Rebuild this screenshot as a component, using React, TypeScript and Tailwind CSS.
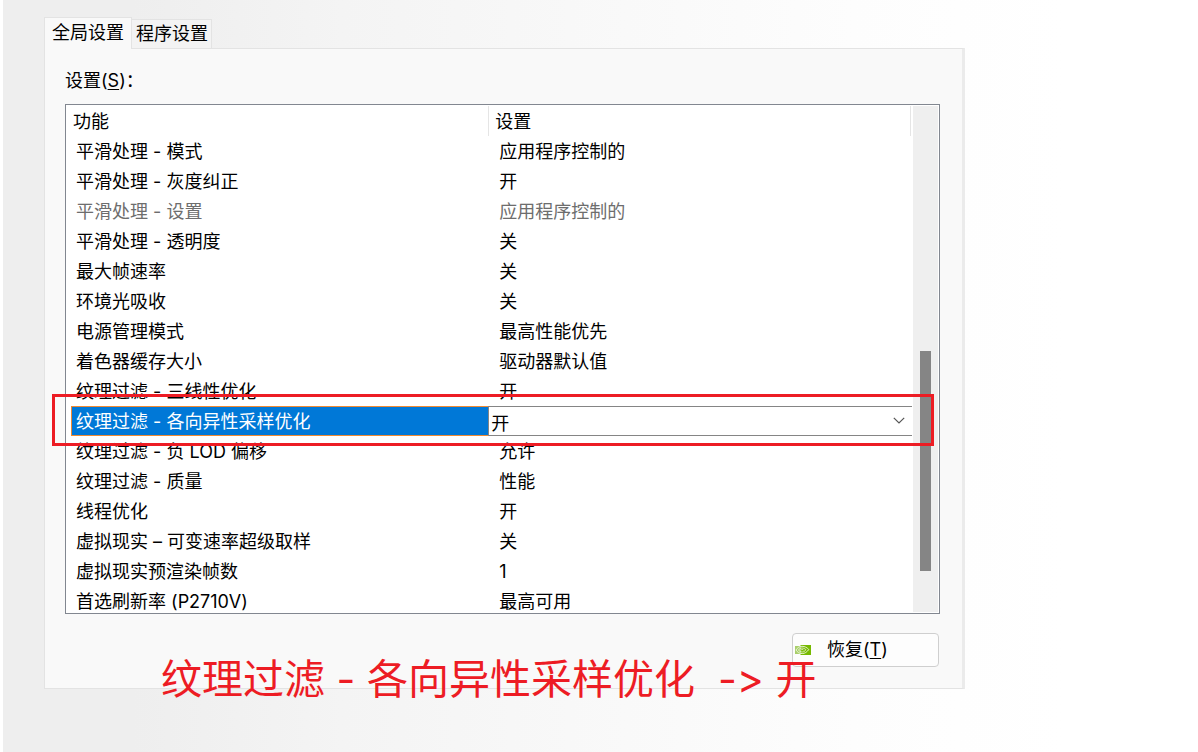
import clsx from "clsx";

type Setting = {
  name: string;
  value: string;
  disabled?: boolean;
  selected?: boolean;
};

const settings: Setting[] = [
  { name: "平滑处理 - 模式", value: "应用程序控制的" },
  { name: "平滑处理 - 灰度纠正", value: "开" },
  { name: "平滑处理 - 设置", value: "应用程序控制的", disabled: true },
  { name: "平滑处理 - 透明度", value: "关" },
  { name: "最大帧速率", value: "关" },
  { name: "环境光吸收", value: "关" },
  { name: "电源管理模式", value: "最高性能优先" },
  { name: "着色器缓存大小", value: "驱动器默认值" },
  { name: "纹理过滤 - 三线性优化", value: "开" },
  { name: "纹理过滤 - 各向异性采样优化", value: "开", selected: true },
  { name: "纹理过滤 - 负 LOD 偏移", value: "允许" },
  { name: "纹理过滤 - 质量", value: "性能" },
  { name: "线程优化", value: "开" },
  { name: "虚拟现实 – 可变速率超级取样", value: "关" },
  { name: "虚拟现实预渲染帧数", value: "1" },
  { name: "首选刷新率 (P2710V)", value: "最高可用" },
];

const Tabs = () => {
  return (
    <div role="tablist" className="relative z-10 -mb-px flex items-end">
      <button
        type="button"
        role="tab"
        aria-selected="true"
        className="h-8 border border-b-0 border-[#e3e3e3] bg-[#f9f9f9] px-[7px] pb-[2px]"
      >
        全局设置
      </button>
      <button
        type="button"
        role="tab"
        aria-selected="false"
        className="h-[30px] border border-l-0 border-[#e3e3e3] bg-[#f3f3f3] pr-[3px] pl-1"
      >
        程序设置
      </button>
    </div>
  );
};

const SettingRow = ({ name, value, disabled, selected }: Setting) => {
  if (selected) {
    return (
      <tr className="h-[30px]">
        <td className="p-0 pl-[5px]">
          <label
            htmlFor="aniso"
            className="block h-[30px] border border-r-0 border-[#f08a32] bg-[#0078d7] pl-1 leading-[30px] text-white"
          >
            {name}
          </label>
        </td>
        <td className="relative p-0">
          <select
            id="aniso"
            defaultValue={value}
            className="block h-[30px] w-full appearance-none border border-r-0 border-[#858585] bg-white pt-[3px] pl-[2px] text-black outline-none"
          >
            <option>开</option>
            <option>关</option>
          </select>
          <svg
            viewBox="0 0 12 7"
            className="pointer-events-none absolute top-[11px] right-[7px] h-[7px] w-3"
            fill="none"
            stroke="#555"
            strokeWidth="1.2"
          >
            <path d="M.8.8 6 6 11.2.8" />
          </svg>
        </td>
      </tr>
    );
  }
  return (
    <tr className={clsx("h-[30px]", disabled && "text-[#6d6d6d]")}>
      <td className="p-0 pt-[2px] pl-[10px]">{name}</td>
      <td className="p-0 pt-[2px] pl-[11px]">{value}</td>
    </tr>
  );
};

const SettingsList = () => {
  return (
    <div className="relative">
      <div className="flex h-[510px] overflow-hidden border border-[#828790] bg-white p-px pl-0">
        <div className="mr-px min-w-0 flex-1">
          <table className="w-full table-fixed border-separate border-spacing-0 text-left">
            <colgroup>
              <col className="w-[49.9%]" />
              <col />
            </colgroup>
            <thead>
              <tr className="h-[30px]">
                <th className="p-0 pt-[2px] pl-[7px] font-normal">功能</th>
                <th className="p-0 font-normal">
                  <div className="mr-px h-[30px] border-x border-[#e5e5e5] pt-[2px] pl-[6px]">
                    设置
                  </div>
                </th>
              </tr>
            </thead>
            <tbody>
              {settings.map((s) => (
                <SettingRow key={s.name} {...s} />
              ))}
            </tbody>
          </table>
        </div>
        <div className="w-[25px] bg-[#efefef] pt-[245px] pl-[7px]">
          <div className="h-[220px] w-[11px] bg-[#858585]" />
        </div>
      </div>
      <div className="pointer-events-none absolute top-[290px] right-[6px] left-[-13px] h-[52px] border-[3px] border-[#ed1c24]" />
    </div>
  );
};

const NvidiaIcon = () => {
  return (
    <svg viewBox="0 0 16 10" className="h-[10px] w-4" fill="none">
      <path fill="#76b900" d="M5.5 0H16v10H5.5z" />
      <path fill="#a9cf6b" d="M0 1h5.5v8H0z" />
      <path
        stroke="#eef6df"
        strokeWidth=".9"
        d="M1 5C2.500 2.600 4.600 1.300 7 1.300c2.800 0 5 1.300 6.800 3.200C12 7 9.800 8.600 7.200 8.600 4.500 8.600 2.300 7.200 1 5Z"
      />
      <path
        stroke="#eef6df"
        strokeWidth=".8"
        d="M3.400 5c.9-1.300 2.200-2 3.600-2 1.600 0 2.900.7 4 1.800C9.800 6.200 8.600 7 7.200 7 5.600 7 4.300 6.200 3.400 5Z"
      />
      <path stroke="#eef6df" strokeWidth=".9" d="M6 5.200c.5-.9 1.500-.9 2.400-.2" />
    </svg>
  );
};

export default function App() {
  return (
    <div className="min-h-screen bg-white pl-[3px] font-['Inter','Noto_Sans_CJK_SC',sans-serif] text-lg leading-7 text-black">
      <main className="min-h-screen bg-[linear-gradient(to_right,#eeeeee_0px,#eeeeee_130px,#f4f4f4_340px,#fdfdfd_850px,#ffffff_1060px)] pt-[17px] pr-10 pl-[41px]">
        <div className="relative max-w-[921px]">
          <Tabs />
          <section className="border border-r-[3px] border-[#e3e3e3] border-r-[#ebebeb] bg-[#f9f9f9] px-5 pt-[18px] pr-[22px] pb-[21px]">
            <div className="mb-[9px]">
              设置(<u className="underline-offset-2">S</u>)：
            </div>
            <SettingsList />
            <div className="mt-[19px] flex justify-end pr-px">
              <button
                type="button"
                className="flex h-[34px] w-[147px] items-center gap-4 rounded border border-[#cfcfcf] bg-[#fdfdfd] pl-[2px]"
              >
                <NvidiaIcon />
                <span>
                  恢复(<u className="underline-offset-2">T</u>)
                </span>
              </button>
            </div>
          </section>
          <p className="pointer-events-none absolute bottom-[-18px] left-[117px] text-[41px] leading-[56px] whitespace-pre text-[#ed1c24] [font-variant-ligatures:none]">
            纹理过滤 - 各向异性采样优化{"  "}-&gt; 开
          </p>
        </div>
      </main>
    </div>
  );
}
